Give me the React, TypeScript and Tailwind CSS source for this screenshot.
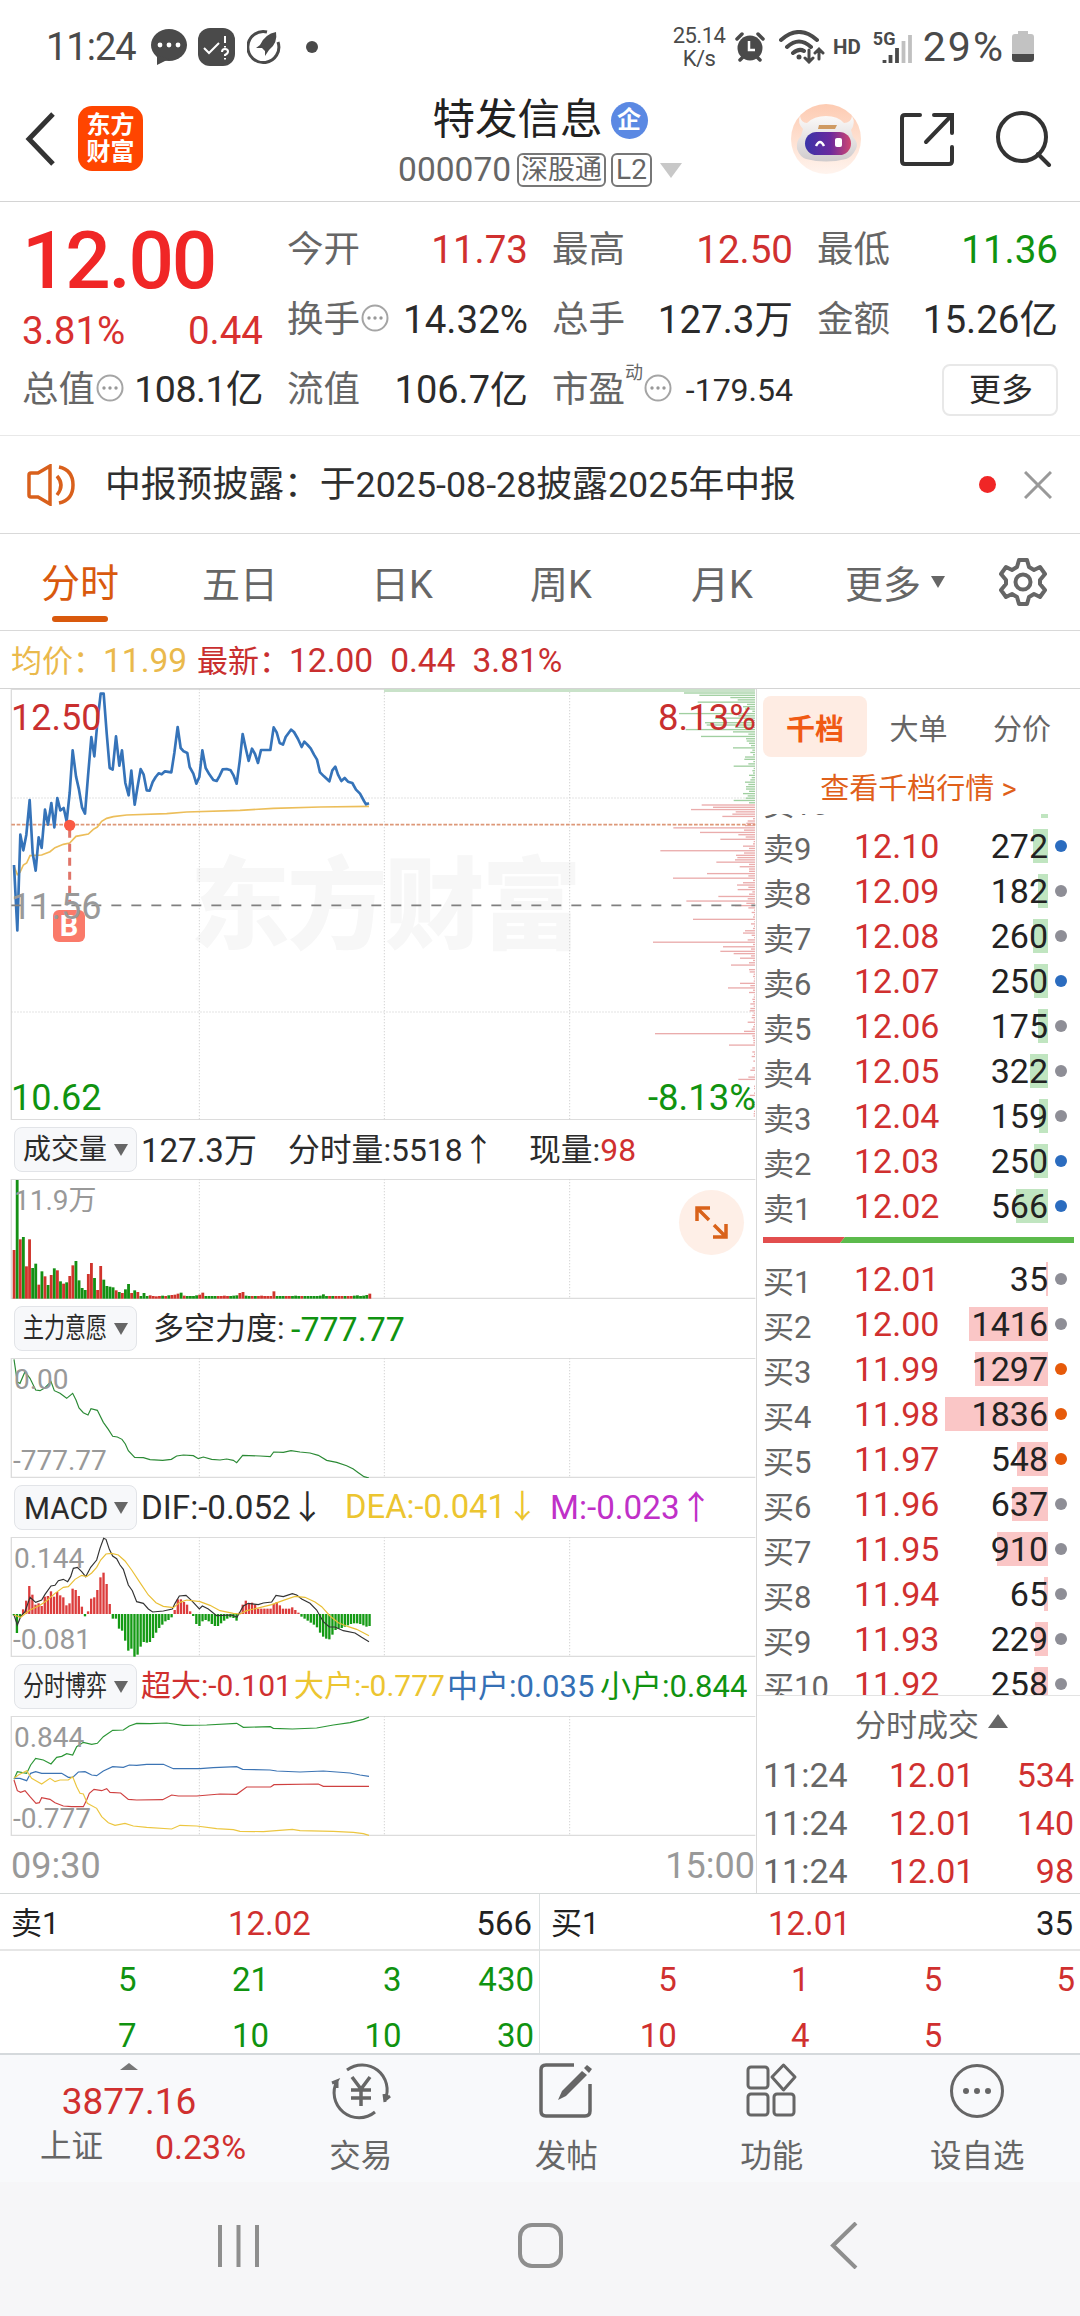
import type { ReactNode } from "react";

const step = 9.28;

const priceLine =
  "42,556 52,752 61,465 70,512 79,465 89,361 98,520 107,573 116,473 125,505 135,390 144,435 154,370 163,443 172,355 181,392 191,385 200,425 209,340 218,212 228,290 237,330 246,383 255,402 264,290 274,172 283,230 292,130 302,42 311,42 320,160 329,265 338,270 348,170 358,258 366,212 376,310 386,347 394,273 404,375 413,320 422,268 431,285 440,332 449,333 458,307 467,292 476,281 485,284 495,275 514,278 523,220 533,142 542,205 551,215 562,220 569,262 580,282 589,312 598,292 607,212 617,265 628,284 640,301 650,304 658,290 668,269 680,268 692,272 701,288 710,312 719,245 728,163 737,205 746,244 756,207 765,223 774,250 783,211 811,211 821,143 830,158 839,190 849,195 857,172 873,150 882,157 894,178 905,202 913,186 923,196 932,206 942,225 951,240 960,278 972,290 988,305 997,272 1006,261 1014,285 1024,304 1034,295 1044,306 1057,310 1068,330 1080,342 1092,364 1098,374 1107,371";
const avgLine =
  "42,560 52,585 60,578 70,556 80,550 90,528 125,526 150,516 165,504 190,494 209,490 228,470 265,463 280,449 292,442 305,425 320,416 340,411 380,406 500,402 560,397 720,392 820,386 960,382 1107,380";

const greenProfile = [
  213, 167, 74, 52, 172, 24, 36, 30, 8, 228, 50, 120, 25, 150, 145, 60, 208, 66, 20, 162, 27, 25, 18, 12, 66, 8, 14, 6,
  30, 32, 5, 20, 64, 4, 8, 6, 18, 10, 14, 30, 20, 27, 27, 18, 36, 22, 28, 64, 18,
];
const redProfile = [
  160, 126, 192, 58, 68, 98, 6, 22, 26, 30, 245, 33, 165, 50, 28, 104, 4, 6, 36, 18, 284, 33, 57, 53, 60, 116, 18, 46,
  18, 18, 144, 20, 246, 6, 36, 54, 20, 52, 8, 18, 110, 22, 206, 26, 60, 20, 3, 10, 3, 6, 186, 2, 12, 3, 6, 30, 36, 10,
  3, 22, 306, 6, 96, 12, 104, 64, 12, 45, 6, 18, 72, 0, 18, 16, 4, 6, 2, 4, 45, 14, 81, 6, 18, 2, 4, 8, 6, 14, 4, 14,
  16, 4, 8, 10, 4, 22, 3, 6, 10, 33, 300, 8, 6, 5, 5, 78, 0, 0, 8, 3, 10, 0, 5, 0, 0, 8, 14, 0, 2, 20, 50, 0, 0, 3, 3,
  0, 3, 16, 0, 0, 3, 5, 18, 0, 3, 4, 4,
];

const volumes: [string, number][] = [
  ["r", 146], ["g", 356], ["r", 178], ["g", 185], ["r", 97], ["r", 178], ["g", 92], ["g", 105], ["r", 42], ["g", 82],
  ["r", 67], ["g", 41], ["r", 71], ["g", 91], ["r", 85], ["g", 52], ["r", 45], ["g", 49], ["r", 68], ["r", 100],
  ["g", 113], ["g", 55], ["g", 32], ["g", 26], ["r", 74], ["r", 107], ["g", 62], ["r", 26], ["r", 98], ["g", 57],
  ["g", 38], ["g", 36], ["g", 34], ["r", 25], ["g", 20], ["r", 17], ["g", 28], ["g", 44], ["r", 17], ["g", 25],
  ["r", 20], ["g", 8], ["g", 17], ["g", 8], ["r", 10], ["r", 8], ["r", 7], ["r", 8], ["g", 9], ["r", 8],
  ["g", 10], ["r", 11], ["r", 12], ["r", 15], ["g", 18], ["r", 9], ["g", 8], ["g", 8], ["g", 8], ["g", 10],
  ["r", 12], ["r", 18], ["g", 8], ["g", 8], ["g", 8], ["g", 8], ["r", 8], ["r", 8], ["r", 9], ["r", 8],
  ["g", 8], ["g", 9], ["g", 10], ["r", 17], ["r", 20], ["g", 9], ["g", 8], ["r", 8], ["g", 8], ["r", 8],
  ["r", 9], ["r", 8], ["r", 8], ["r", 8], ["r", 22], ["g", 8], ["g", 8], ["g", 8], ["r", 8], ["r", 8],
  ["g", 8], ["g", 9], ["g", 8], ["r", 8], ["g", 8], ["g", 8], ["g", 8], ["g", 8], ["g", 8], ["g", 9],
  ["g", 13], ["g", 8], ["r", 8], ["g", 8], ["r", 8], ["r", 8], ["r", 8], ["g", 8], ["r", 8], ["r", 8],
  ["g", 9], ["g", 10], ["g", 8], ["g", 9], ["g", 11], ["r", 15],
];

const macdBars = [
  -4, -57, -10, 14, 40, 84, 58, 28, 32, 24, 52, 54, 68, 52, 66, 56, 50, 26, 32, 76, 72, 54, 22, -7, 8, 46, 50, 72, 110,
  124, 90, 30, -14, -14, -44, -50, -80, -110, -104, -128, -122, -98, -84, -86, -84, -72, -56, -42, -32, -22, -18, -10,
  12, 44, 44, 36, 28, 8, -6, -30, -36, -22, -18, -22, -30, -36, -36, -28, -20, -14, -10, -12, -20, 4, 28, 40, 32, 34,
  28, 16, 16, 16, 16, 16, 30, 36, 26, 16, 16, 16, 20, 12, 4, -8, -14, -20, -26, -32, -40, -56, -68, -74, -76, -62, -48,
  -44, -42, -38, -34, -30, -28, -28, -30, -34, -38, -36,
];

const stats = [
  [
    { label: "今开", value: "11.73", color: "text-[#d0302f]" },
    { label: "最高", value: "12.50", color: "text-[#d0302f]" },
    { label: "最低", value: "11.36", color: "text-[#109310]" },
  ],
  [
    { label: "换手", value: "14.32%", color: "text-[#2b2b2b]", tip: true },
    { label: "总手", value: "127.3万", color: "text-[#2b2b2b]" },
    { label: "金额", value: "15.26亿", color: "text-[#2b2b2b]" },
  ],
];

const asks = [
  { name: "卖10", price: "12.11", vol: 126, dot: "bg-[#8e8e96]" },
  { name: "卖9", price: "12.10", vol: 272, dot: "bg-[#2b6cbf]" },
  { name: "卖8", price: "12.09", vol: 182, dot: "bg-[#8e8e96]" },
  { name: "卖7", price: "12.08", vol: 260, dot: "bg-[#8e8e96]" },
  { name: "卖6", price: "12.07", vol: 250, dot: "bg-[#2b6cbf]" },
  { name: "卖5", price: "12.06", vol: 175, dot: "bg-[#8e8e96]" },
  { name: "卖4", price: "12.05", vol: 322, dot: "bg-[#8e8e96]" },
  { name: "卖3", price: "12.04", vol: 159, dot: "bg-[#8e8e96]" },
  { name: "卖2", price: "12.03", vol: 250, dot: "bg-[#2b6cbf]" },
  { name: "卖1", price: "12.02", vol: 566, dot: "bg-[#2b6cbf]" },
];

const bids = [
  { name: "买1", price: "12.01", vol: 35, dot: "bg-[#8e8e96]" },
  { name: "买2", price: "12.00", vol: 1416, dot: "bg-[#8e8e96]" },
  { name: "买3", price: "11.99", vol: 1297, dot: "bg-[#e65a0a]" },
  { name: "买4", price: "11.98", vol: 1836, dot: "bg-[#e65a0a]" },
  { name: "买5", price: "11.97", vol: 548, dot: "bg-[#e65a0a]" },
  { name: "买6", price: "11.96", vol: 637, dot: "bg-[#8e8e96]" },
  { name: "买7", price: "11.95", vol: 910, dot: "bg-[#8e8e96]" },
  { name: "买8", price: "11.94", vol: 65, dot: "bg-[#8e8e96]" },
  { name: "买9", price: "11.93", vol: 229, dot: "bg-[#8e8e96]" },
  { name: "买10", price: "11.92", vol: 258, dot: "bg-[#8e8e96]" },
];

function StatusBar() {
  return (
    <div className="flex h-[94px] items-center text-[#4a4a4a]">
      <span className="ml-[46px] w-[105px] text-[38px] leading-none tracking-[-1px]">11:24</span>
      <svg width="36" height="38" viewBox="0 0 36 38">
        <ellipse cx="18" cy="17" rx="18" ry="16" fill="#4a4a4a" />
        <path d="M6 27 L6 37 L18 31Z" fill="#4a4a4a" />
        <circle cx="9" cy="17" r="2.4" fill="#fff" />
        <circle cx="18" cy="17" r="2.4" fill="#fff" />
        <circle cx="27" cy="17" r="2.4" fill="#fff" />
      </svg>
      <svg className="ml-[11px]" width="37" height="38" viewBox="0 0 37 38">
        <rect width="37" height="38" rx="12" fill="#4a4a4a" />
        <path d="M6 20 L11 25 L21 15" fill="none" stroke="#fff" strokeWidth="2" />
        <path d="M27 8 V15 M27 18 V19.500 M24 24 q0 -3 3 -3 q3 0 3 2.500 q0 2 -3 3.500 v1 M27 30 v1.500" fill="none" stroke="#fff" strokeWidth="2" />
      </svg>
      <svg className="ml-[12px]" width="34" height="36" viewBox="0 0 34 36" fill="none" stroke="#4a4a4a" strokeWidth="3">
        <path d="M20 3 A15.500 15.500 0 1 0 31 13" />
        <path d="M29 3 Q18 5 13 16 L9 19 L15 19 L18 22 L18 27 L22 21 Q31 14 29 3Z" fill="#4a4a4a" stroke="none" />
      </svg>
      <span className="ml-[25px] size-[12px] rounded-full bg-[#4a4a4a]" />
      <div className="ml-[356px] flex w-[50px] flex-col items-center text-[22px] leading-[23px] tracking-[-0.5px]">
        <span>25.14</span>
        <span>K/s</span>
      </div>
      <svg className="ml-[11px]" width="30" height="30" viewBox="0 0 30 30">
        <circle cx="15" cy="16" r="12.500" fill="#4a4a4a" />
        <path d="M2 7 L7 2 M28 7 L23 2 M5 28 L8 25 M25 28 L22 25" stroke="#4a4a4a" strokeWidth="3.500" strokeLinecap="round" />
        <path d="M14 9 V18 H20" stroke="#fff" strokeWidth="2.500" fill="none" />
      </svg>
      <svg className="ml-[14px]" width="46" height="34" viewBox="0 0 46 34" fill="none" stroke="#4a4a4a" strokeWidth="4" strokeLinecap="round">
        <path d="M2 10 Q20 -6 38 10 M8 17 Q20 6 32 17 M14 23 Q20 18 25 21" />
        <circle cx="20" cy="27" r="2.500" fill="#4a4a4a" stroke="none" />
        <path d="M30 20 V32 M26 28 L30 32 L34 28 M40 29 V19 M36 23 L40 19 L44 23" strokeWidth="3" />
      </svg>
      <span className="ml-[8px] text-[20.5px] leading-none font-bold">HD</span>
      <div className="ml-[12px] flex h-[34px] w-[40px] items-start">
        <span className="text-[18px] leading-none font-bold">5G</span>
        <svg className="mt-[3px] -ml-[13px] shrink-0" width="30" height="31" viewBox="0 0 30 31">
          <path d="M2.500 27 V30 M8.500 22 V30 M15 15 V30" stroke="#4a4a4a" strokeWidth="3.800" />
          <path d="M21.500 8 V30 M28 2 V30" stroke="#c0c0c0" strokeWidth="3.800" />
        </svg>
      </div>
      <span className="ml-[10px] w-[88px] text-[41px] leading-none tracking-[2px]">29%</span>
      <svg className="ml-px" width="22" height="32" viewBox="0 0 22 32">
        <path d="M6 0 H16 V3 H19 Q22 3 22 6 V26 H0 V6 Q0 3 3 3 H6Z" fill="#c2c2c2" />
        <path d="M0 23 H22 V28 Q22 31 18 31 H4 Q0 31 0 28Z" fill="#4a4a4a" />
      </svg>
    </div>
  );
}

function Robot() {
  return (
    <svg width="72" height="72" viewBox="0 0 72 72">
      <defs>
        <linearGradient id="halo" x1="0" y1="0" x2="0" y2="1">
          <stop offset="0" stopColor="#fdcbb2" />
          <stop offset="1" stopColor="#fff4ee" />
        </linearGradient>
        <linearGradient id="visor" x1="0" y1="0" x2="1" y2="0">
          <stop offset="0" stopColor="#3a34a8" />
          <stop offset="0.55" stopColor="#6a2a9e" />
          <stop offset="1" stopColor="#d04670" />
        </linearGradient>
        <linearGradient id="shell" x1="0" y1="0" x2="0" y2="1">
          <stop offset="0" stopColor="#fbf9f8" />
          <stop offset="1" stopColor="#cfcbcd" />
        </linearGradient>
      </defs>
      <circle cx="36" cy="36" r="35" fill="url(#halo)" />
      <path d="M10 13 Q11 20 17 20 Q24 13 36 13 Q48 13 54 20 Q61 20 62 13 Q66 20 61 27 L63 34 Q69 40 66 46 Q62 54 56 56 Q36 61 16 56 Q10 54 7 46 Q6 38 11 33 L13 26 Q7 20 10 13Z" fill="url(#shell)" />
      <path d="M29 22 H47 L45 26 H28Z" fill="#cf9a62" />
      <rect x="15" y="29" width="46" height="23" rx="11.5" fill="url(#visor)" />
      <path d="M26 43 Q30 35 34 43" fill="none" stroke="#fff" strokeWidth="2.500" />
      <rect x="45" y="35" width="7" height="9" rx="2" fill="#fff" />
    </svg>
  );
}

function Header() {
  return (
    <div className="flex h-[108px] items-center border-b border-[#d4d4d4] pb-[18px]">
      <svg className="ml-[24px]" width="32" height="54" viewBox="0 0 32 54" fill="none" stroke="#333" strokeWidth="5">
        <path d="M29 2 L5 27 L29 52" />
      </svg>
      <div className="ml-[22px] flex size-[65px] flex-col items-center justify-center rounded-[14px] bg-[#ff4500] text-[24px] leading-[27px] font-bold text-white">
        <span>东方</span>
        <span>财富</span>
      </div>
      <div className="mt-[13px] ml-[222px] flex w-[350px] flex-col items-center">
        <div className="flex h-[50px] items-center text-[42.5px] leading-none text-[#222]">
          特发信息
          <span className="ml-[8px] flex size-[37px] items-center justify-center rounded-full bg-[#5b89e3] text-[24px] font-bold text-white">
            企
          </span>
        </div>
        <div className="flex h-[50px] items-center text-[33.5px] leading-none text-[#666]">
          000070
          <span className="ml-[6px] flex h-[34px] items-center rounded-[6px] border-2 border-[#777] px-[2px] text-[27px]">深股通</span>
          <span className="ml-[5px] flex h-[34px] items-center rounded-[6px] border-2 border-[#777] px-[3px] text-[28px]">L2</span>
          <svg className="ml-[8px]" width="22" height="15" viewBox="0 0 22 15">
            <path d="M0 0 H22 L11 15Z" fill="#c8c8c8" />
          </svg>
        </div>
      </div>
      <div className="ml-[75px]">
        <Robot />
      </div>
      <svg className="ml-[37px]" width="56" height="56" viewBox="0 0 56 56" fill="none" stroke="#333" strokeWidth="4" strokeLinecap="round">
        <path d="M21 4 H6 Q3 4 3 7 V50 Q3 53 6 53 H50 Q53 53 53 50 V36 M35 4 H53 V22 M52 5 L27 31" />
      </svg>
      <svg className="ml-[40px]" width="58" height="56" viewBox="0 0 58 56" fill="none" stroke="#333" strokeWidth="4" strokeLinecap="round">
        <circle cx="27" cy="26" r="24" />
        <path d="M43 43 L54 54" />
      </svg>
    </div>
  );
}

function Tip() {
  return (
    <svg className="mb-[4px] ml-px shrink-0" width="28" height="28" viewBox="0 0 28 28">
      <circle cx="14" cy="14" r="12.500" fill="none" stroke="#a5a5a5" strokeWidth="2" />
      <circle cx="8" cy="14" r="1.700" fill="#999" />
      <circle cx="14" cy="14" r="1.700" fill="#999" />
      <circle cx="20" cy="14" r="1.700" fill="#999" />
    </svg>
  );
}

function Quote() {
  return (
    <div className="h-[234px] border-b border-[#e8e8e8] pt-[13px] pr-[22px] pl-[22px] text-[36.5px] leading-none text-[#666]">
      <div className="grid grid-cols-[241px_1fr] gap-[24px]">
        <div className="flex flex-col text-[#d8302f]">
          <span className="mt-[6px] text-[80px] font-medium tracking-[-2.2px] text-[#f02626]">12.00</span>
          <div className="mt-[11px] flex justify-between text-[38.5px]">
            <span>3.81%</span>
            <span>0.44</span>
          </div>
        </div>
        <div>
          {stats.map((row, i) => (
            <div key={i} className="grid h-[70px] grid-cols-3 items-center gap-[24px]">
              {row.map((s) => (
                <div key={s.label} className="flex items-center">
                  {s.label}
                  {s.tip && <Tip />}
                  <span className={`ml-auto text-[38.5px] ${s.color}`}>{s.value}</span>
                </div>
              ))}
            </div>
          ))}
        </div>
      </div>
      <div className="grid h-[70px] grid-cols-4 items-center gap-[24px]">
        <div className="flex items-center">
          总值
          <Tip />
          <span className="ml-auto text-[37.5px] tracking-[-0.5px] text-[#2b2b2b]">108.1亿</span>
        </div>
        <div className="flex items-center">
          流值
          <span className="ml-auto text-[38px] text-[#2b2b2b]">106.7亿</span>
        </div>
        <div className="flex items-center">
          市盈
          <span className="mb-[34px] text-[18px]">动</span>
          <Tip />
          <span className="ml-auto text-[32px] text-[#2b2b2b]">-179.54</span>
        </div>
        <div className="flex justify-end">
          <span className="flex h-[52px] w-[116px] items-center justify-center rounded-[8px] border-2 border-[#e8e8e8] pl-[2px] text-[32px] text-[#2b2b2b]">
            更多
          </span>
        </div>
      </div>
    </div>
  );
}

function Notice() {
  return (
    <div className="flex h-[98px] items-center border-b border-[#d9d9d9] text-[35.8px] leading-none text-[#2f2f2f]">
      <svg className="ml-[27px]" width="50" height="42" viewBox="0 0 50 42" fill="none" stroke="#d9601c" strokeWidth="3.500">
        <path d="M2 11 Q2 9 4 9 H11 L23 2 V40 L11 33 H4 Q2 33 2 31Z" />
        <path d="M30 12 Q38 21 30 31 M32 3 Q46 6 46 21 Q46 36 32 39" />
      </svg>
      <span className="ml-[28px] pt-[2px]">中报预披露：于2025-08-28披露2025年中报</span>
      <span className="mr-[28px] ml-auto size-[17px] rounded-full bg-[#f02626]" />
      <svg className="mr-[28px]" width="28" height="28" viewBox="0 0 28 28" stroke="#999" strokeWidth="3">
        <path d="M1 1 L27 27 M27 1 L1 27" />
      </svg>
    </div>
  );
}

function Tabs() {
  return (
    <div className="flex h-[97px] items-center border-b border-[#d9d9d9] text-[38px] leading-none text-[#666]">
      <div className="relative ml-[41px] w-[161px] pt-[5px] text-[39px] text-[#d9590d]">
        分时
        <span className="absolute top-[56px] left-[11px] h-[6px] w-[56px] rounded-full bg-[#d9590d]" />
      </div>
      <span className="w-[169px] pt-[5px]">五日</span>
      <span className="w-[159px] pt-[5px]">日K</span>
      <span className="w-[161px] pt-[5px]">周K</span>
      <span className="w-[154px] pt-[5px]">月K</span>
      <span className="pt-[5px]">更多</span>
      <svg className="ml-[10px]" width="14" height="12" viewBox="0 0 14 12">
        <path d="M0 0 H14 L7 12Z" fill="#666" />
      </svg>
      <svg className="mr-[33px] ml-auto" width="48" height="50" viewBox="0 0 48 50" fill="none" stroke="#666" strokeWidth="4">
        <path
          strokeLinejoin="round"
          d="M20 3 H28 L30 10 L35 13 L41 10 L46 17 L41 23 V27 L46 33 L41 40 L35 37 L30 40 L28 47 H20 L18 40 L13 37 L7 40 L2 33 L7 27 V23 L2 17 L7 10 L13 13 L18 10Z"
        />
        <circle cx="24" cy="25" r="7.500" />
      </svg>
    </div>
  );
}

function Grid({ top, bottom }: { top: number; bottom: number }) {
  return (
    <>
      <path d={`M34 ${top + 1} H2266 M34 ${bottom - 2} H2266 M34 ${top} V${bottom}`} stroke="#dcdcdc" strokeWidth="4" />
      <path d={`M598 ${top} V${bottom} M1153 ${top} V${bottom} M1709 ${top} V${bottom}`} stroke="#d4d4d4" strokeWidth="3" strokeDasharray="4 5" />
    </>
  );
}

function PriceChart() {
  return (
    <div className="relative h-[431px] text-[36px] leading-none">
      <svg className="block" width="757" height="431" viewBox="0 28 2271 1293" fill="none">
        <text x="570" y="783" fontSize="300" fontWeight="900" fill="#f7f7f7" textLength="1175">
          东方财富
        </text>
        <Grid top={28} bottom={1322} />
        <path d="M34 355 H2266 M34 997 H2266" stroke="#d4d4d4" strokeWidth="3" strokeDasharray="4 5" />
        <rect x="1152" y="28" width="1113" height="9" fill="#c9e2c9" />
        {greenProfile.map((w, i) => (
          <rect key={i} x={2265 - w} y={38 + i * 6.86} width={w} height="4" fill="#a0cfa0" />
        ))}
        {redProfile.map((w, i) => (
          <rect key={i} x={2265 - w} y={374 + i * 6.86} width={w} height="4" fill="#eaacac" />
        ))}
        <path d="M34 435 H2266" stroke="#dd9878" strokeWidth="5" strokeDasharray="11 5" />
        <polyline points={avgLine} stroke="#ecbe5a" strokeWidth="5" />
        <polyline points={priceLine} stroke="#3573b9" strokeWidth="8" strokeLinejoin="round" />
        <path d="M34 677 H2266" stroke="#808080" strokeWidth="5" strokeDasharray="30 30" />
        <path d="M209 450 V670" stroke="#e07468" strokeWidth="9" strokeDasharray="24 18" />
        <circle cx="209" cy="437" r="17" fill="#fa5a44" />
      </svg>
      <span className="absolute top-[221px] left-[53px] flex size-[32px] items-center justify-center rounded-[6px] bg-[#fa7a6a] text-[29px] font-bold text-white">
        B
      </span>
      <span className="absolute top-[11px] left-[11px] text-[#c92f2f]">12.50</span>
      <span className="absolute top-[200px] left-[11px] text-[#999]">11.56</span>
      <span className="absolute top-[391px] left-[11px] text-[#109310]">10.62</span>
      <span className="absolute top-[11px] right-0 text-[36.5px] text-[#c92f2f]">8.13%</span>
      <span className="absolute top-[391px] right-0 text-[36.5px] text-[#109310]">-8.13%</span>
    </div>
  );
}

function Panel(props: {
  name: string;
  nameStyle?: string;
  head: ReactNode;
  top: number;
  max: string;
  min?: string;
  children: ReactNode;
}) {
  return (
    <div className="h-[179px]">
      <div className="flex h-[59px] items-center text-[32px] leading-none whitespace-nowrap text-[#2b2b2b]">
        <div className="ml-[14px] flex h-[45px] w-[123px] shrink-0 items-center justify-between rounded-[8px] border border-[#e2e4e8] bg-[#f7f8fa] px-[8px]">
          <span className="w-[84px] text-[28px]">
            <span className={`inline-block ${props.nameStyle ?? ""}`}>{props.name}</span>
          </span>
          <svg className="shrink-0" width="14" height="12" viewBox="0 0 14 12">
            <path d="M0 0 H14 L7 12Z" fill="#666" />
          </svg>
        </div>
        {props.head}
      </div>
      <div className="relative h-[120px] text-[28px] leading-none text-[#999]">
        <svg className="block" width="757" height="120" viewBox={`0 ${props.top} 2271 360`} fill="none">
          <Grid top={props.top} bottom={props.top + 360} />
          {props.children}
        </svg>
        <span className="absolute top-[8px] left-[14px]">{props.max}</span>
        {props.min && <span className="absolute bottom-[3px] left-[13px]">{props.min}</span>}
      </div>
    </div>
  );
}

function Charts() {
  return (
    <div className="w-[757px] shrink-0 border-r border-[#d9d9d9]">
      <PriceChart />
      <Panel
        name="成交量"
        top={178}
        max="11.9万"
        head={
          <>
            <span className="ml-[4px] w-[147px] pt-[2px] text-[33px]">127.3万</span>
            <span className="w-[241px] pt-[2px] text-[31.8px]">分时量:5518↑</span>
            <span className="pt-[2px] text-[31.8px]">
              现量:<span className="text-[#d0302f]">98</span>
            </span>
          </>
        }
      >
        {volumes.map(([c, h], i) => (
          <rect key={i} x={38 + i * step} y={537 - h} width="8.500" height={h} fill={c === "r" ? "#d0342c" : "#149014"} />
        ))}
      </Panel>
      <Panel
        name="主力意愿"
        nameStyle="origin-left scale-x-[0.75]"
        top={714}
        max="0.00"
        min="-777.77"
        head={
          <>
            <span className="ml-[16px] w-[138px] text-[31px]">多空力度:</span>
            <span className="text-[34px] text-[#109310]">-777.77</span>
          </>
        }
      >
        <polyline
          stroke="#2b8a35"
          strokeWidth="3.500"
          points="42,718 52,786 60,790 75,755 90,775 107,810 120,812 135,803 153,785 163,812 180,820 200,835 218,820 228,840 237,864 250,878 264,885 273,866 292,871 310,907 325,928 338,949 352,951 366,958 376,972 385,992 404,1012 430,1013 450,1019 488,1021 514,1018 530,1008 550,1005 580,1007 595,1016 610,1011 635,1018 660,1020 680,1017 700,1021 710,1028 728,1006 780,1008 811,1010 821,996 850,997 873,992 900,996 930,999 955,1006 980,1021 1010,1027 1040,1037 1060,1047 1075,1058 1092,1070 1107,1074"
        />
      </Panel>
      <Panel
        name="MACD"
        nameStyle="origin-left scale-x-[0.93] text-[32px] pl-px"
        top={171}
        max="0.144"
        min="-0.081"
        head={
          <>
            <span className="ml-[4px] w-[204px] text-[33.2px]">DIF:-0.052↓</span>
            <span className="w-[205px] text-[32.8px] text-[#ecc530]">DEA:-0.041↓</span>
            <span className="text-[33.2px] text-[#c030c8]">M:-0.023↑</span>
          </>
        }
      >
        {macdBars.map((v, i) => (
          <rect
            key={i}
            x={38 + i * step}
            y={v > 0 ? 402 - v : 402}
            width="7"
            height={Math.abs(v)}
            fill={v > 0 ? "#dc3c3c" : "#149a14"}
          />
        ))}
        <polyline
          stroke="#333"
          strokeWidth="3.5"
          points="42,405 52,435 62,410 75,395 90,352 107,367 125,360 135,343 153,318 165,316 175,302 190,298 203,305 212,290 220,265 232,262 245,275 257,290 265,275 272,262 290,240 300,205 311,175 318,178 328,208 338,228 350,236 360,255 370,268 385,315 397,332 410,365 430,370 445,387 458,396 490,393 517,387 525,370 538,348 558,346 575,362 598,387 607,378 625,387 650,407 695,405 711,412 730,378 745,370 775,374 790,369 815,366 828,346 850,350 877,341 890,345 905,357 930,370 950,390 970,425 988,441 1005,441 1030,452 1065,459 1085,472 1107,485"
        />
        <polyline
          stroke="#e9bf35"
          strokeWidth="3.5"
          points="42,405 62,412 90,390 120,376 140,362 165,340 190,322 205,320 225,298 245,286 260,290 275,279 290,262 302,240 318,222 335,220 355,225 375,243 395,270 420,308 445,345 468,368 490,379 520,383 540,367 560,360 600,365 630,376 660,392 700,400 720,402 740,392 770,385 815,374 850,361 885,349 915,352 945,366 965,380 990,408 1015,428 1045,440 1070,448 1107,467"
        />
      </Panel>
      <Panel
        name="分时博弈"
        nameStyle="origin-left scale-x-[0.75]"
        top={708}
        max="0.844"
        min="-0.777"
        head={
          <div className="ml-[4px] flex text-[30px]">
            <span className="w-[153px] text-[#d0302f]">超大:-0.101</span>
            <span className="w-[153px] text-[#ecc530]">大户:-0.777</span>
            <span className="w-[153px] text-[31px] text-[#3570b5]">中户:0.035</span>
            <span className="text-[31px] text-[#109310]">小户:0.844</span>
          </div>
        }
      >
        <g strokeWidth="3.5">
          <polyline
            stroke="#2c9636"
            points="42,898 52,875 80,880 92,855 107,835 130,840 153,852 170,832 185,829 200,821 218,825 230,800 250,787 275,793 292,790 310,770 338,751 370,750 388,738 410,730 450,731 500,729 550,736 620,735 710,730 730,742 811,740 820,745 877,747 950,744 1000,735 1050,728 1090,718 1107,711"
          />
          <polyline
            stroke="#3c74b4"
            points="42,895 60,895 80,902 92,880 107,875 125,880 185,880 205,892 218,892 235,876 255,875 275,885 290,887 310,873 338,860 370,862 388,855 410,856 440,853 490,853 520,866 600,866 640,863 710,860 728,868 810,870 830,873 900,876 970,873 1050,879 1080,885 1107,889"
          />
          <polyline
            stroke="#cf4040"
            points="42,900 52,932 62,937 75,932 90,950 108,970 118,968 125,953 150,958 165,968 190,978 215,980 250,980 260,960 268,940 282,928 305,932 320,926 330,937 362,939 385,958 410,960 488,959 515,945 535,948 590,948 660,942 710,943 740,921 812,921 822,914 955,912 970,919 1107,919"
          />
          <polyline
            stroke="#ecc640"
            points="42,895 55,885 80,872 95,895 125,912 150,895 165,905 180,900 205,900 218,890 230,920 240,940 250,942 262,970 290,985 305,1010 325,1028 345,1036 375,1030 400,1038 440,1042 515,1047 540,1036 590,1038 650,1046 700,1049 720,1054 790,1055 877,1048 900,1052 1000,1054 1060,1057 1090,1061 1107,1066"
          />
        </g>
      </Panel>
      <div className="flex h-[57px] items-center justify-between pt-[2px] pr-px pl-[11px] text-[36px] leading-none text-[#999]">
        <span>09:30</span>
        <span>15:00</span>
      </div>
    </div>
  );
}

function Level({ row, bar }: { row: (typeof asks)[number]; bar: string }) {
  return (
    <div className="flex h-[45px] shrink-0 items-center pl-[6px] text-[34px] leading-none">
      <span className="w-[91px] pt-[8px] text-[31px] text-[#666]">{row.name}</span>
      <span className="w-[84px] text-[#d0302f]">{row.price}</span>
      <div className="relative flex h-[34px] w-[110px] items-center justify-end text-[#222]">
        <span className={`absolute top-0 right-0 h-full ${bar}`} style={{ width: Math.max(row.vol * 0.0561, 1) }} />
        <span className="relative">{row.vol}</span>
      </div>
      <span className={`ml-[7px] size-[12px] rounded-full ${row.dot}`} />
    </div>
  );
}

function OrderBook() {
  return (
    <div className="flex flex-1 flex-col leading-none">
      <div className="mt-[7px] ml-[6px] flex h-[61px] items-center text-[29px] text-[#666]">
        <span className="flex h-full w-[104px] items-center justify-center rounded-[8px] bg-[#feece3] pt-[8px] font-bold text-[#f05a14]">千档</span>
        <span className="w-[103px] pt-[8px] text-center">大单</span>
        <span className="w-[104px] pt-[8px] text-center">分价</span>
      </div>
      <div className="flex h-[57px] items-center justify-center pt-[9px] text-[29px] text-[#e0601a]">查看千档行情 &gt;</div>
      <div className="flex h-[416px] flex-col justify-end overflow-hidden">
        {asks.map((row) => (
          <Level key={row.name} row={row} bar="bg-[#c0e5c0]" />
        ))}
      </div>
      <svg className="mt-[9px] ml-[6px] shrink-0" width="311" height="6" viewBox="0 0 311 6">
        <path d="M0 0 H82 L77 6 H0Z" fill="#e24e4e" />
        <path d="M82 0 H311 V6 H77Z" fill="#5cba4c" />
      </svg>
      <div className="mt-[13px] h-[441px] overflow-hidden border-b border-[#e3e3e3]">
        {bids.map((row) => (
          <Level key={row.name} row={row} bar="bg-[#fac6c6]" />
        ))}
      </div>
      <div className="flex h-[54px] items-center justify-center pt-[5px] pl-[26px] text-[31px] text-[#666]">
        分时成交
        <svg className="mb-[9px] ml-[9px]" width="20" height="14" viewBox="0 0 20 14">
          <path d="M10 0 L20 14 H0Z" fill="#666" />
        </svg>
      </div>
      {["534", "140", "98"].map((vol) => (
        <div key={vol} className="flex h-[48px] items-center pt-[3px] pr-[6px] pl-[6px] text-[34px] text-[#d0302f]">
          <span className="w-[126px] text-[#666]">11:24</span>
          <span>12.01</span>
          <span className="ml-auto">{vol}</span>
        </div>
      ))}
    </div>
  );
}

function Queue(props: { name: string; price: string; total: string; rows: string[][]; color: string }) {
  return (
    <div className="w-1/2 border-r border-[#dde2e2] text-[33px] leading-none last:border-r-0">
      <div className="flex h-[57px] items-center border-b-2 border-[#e6e6e6] pt-[4px] pr-[7px] pl-[11px] text-[#222]">
        <span className="w-[217px] text-[31px]">{props.name}</span>
        <span className="text-[#d0302f]">{props.price}</span>
        <span className="ml-auto">{props.total}</span>
      </div>
      {props.rows.map((row, i) => (
        <div key={i} className={`grid h-[56px] grid-cols-4 items-center pr-[5px] pl-[4px] text-right ${props.color}`}>
          {row.map((n, j) => (
            <span key={j}>{n}</span>
          ))}
        </div>
      ))}
    </div>
  );
}

function BarItem({ label, children }: { label: string; children: ReactNode }) {
  return (
    <div className="flex w-[205.500px] flex-col items-center text-[31.5px] leading-none text-[#666]">
      <svg className="mt-[7px]" width="60" height="58" viewBox="0 0 60 58" fill="none" stroke="#666" strokeWidth="3">
        {children}
      </svg>
      <span className="mt-[21px]">{label}</span>
    </div>
  );
}

function BottomBar() {
  return (
    <div className="flex h-[129px] border-t-2 border-[#d5d9dc] bg-[#f8f9fb] leading-none">
      <div className="flex w-[258px] flex-col items-center text-[37px] text-[#d0302f]">
        <svg className="mt-[8px]" width="18" height="7" viewBox="0 0 18 7">
          <path d="M9 0 L18 7 H0Z" fill="#777" />
        </svg>
        <span className="mt-[13px]">3877.16</span>
        <div className="mt-[10px] flex items-center text-[34px]">
          <span className="w-[115px] text-[31.5px] text-[#666]">上证</span>
          <span className="-mr-[28px]">0.23%</span>
        </div>
      </div>
      <BarItem label="交易">
        <path d="M16 8 A25 25 0 0 1 54 38 L59 34 M44 50 A25 25 0 0 1 6 19 L1 21 M54 40 L53 32 M6 18 V26" />
        <path d="M21 15 L30 27 L39 15 M30 27 V44 M20 28 H40 M20 36 H40" strokeWidth="3.500" />
      </BarItem>
      <BarItem label="发帖">
        <path d="M38 3 H10 Q5 3 5 8 V49 Q5 54 10 54 H49 Q54 54 54 49 V22" strokeWidth="3.500" />
        <path d="M22 38 L26 29 L46 9 L51 13 L30 34Z M48 6 L51 3 L56 7 L53 11Z" fill="#666" stroke="none" />
      </BarItem>
      <BarItem label="功能">
        <rect x="6" y="5" width="20" height="21" rx="3" />
        <path d="M41.500 3 L53 15 L41.500 28 L30 15Z" strokeLinejoin="round" />
        <rect x="6" y="32" width="20" height="21" rx="3" />
        <rect x="32" y="32" width="20" height="21" rx="3" />
      </BarItem>
      <BarItem label="设自选">
        <circle cx="30" cy="29" r="25.500" />
        <circle cx="19" cy="29" r="3" fill="#666" stroke="none" />
        <circle cx="30" cy="29" r="3" fill="#666" stroke="none" />
        <circle cx="41" cy="29" r="3" fill="#666" stroke="none" />
      </BarItem>
    </div>
  );
}

export default function App() {
  return (
    <div className="flex h-[2316px] w-[1080px] flex-col overflow-hidden bg-white font-[Roboto,'Noto_Sans_CJK_SC',sans-serif]">
      <StatusBar />
      <Header />
      <Quote />
      <Notice />
      <Tabs />
      <div className="flex h-[58px] items-center border-b border-[#d4d4d4] pt-[3px] pl-[11px] text-[33.5px] leading-none whitespace-nowrap text-[#c92f2f]">
        <span className="w-[92px] text-[31px] text-[#eab94c]">均价：</span>
        <span className="w-[94px] text-[#eab94c]">11.99</span>
        <span className="w-[92px] text-[31px]">最新：</span>
        <span>12.00</span>
        <span className="ml-[17px]">0.44</span>
        <span className="ml-[17px]">3.81%</span>
      </div>
      <div className="relative flex h-[1204px]">
        <Charts />
        <OrderBook />
        <div className="absolute top-[501px] left-[679px] flex size-[65px] items-center justify-center rounded-full bg-[#feefe7]">
          <svg width="33" height="33" viewBox="0 0 33 33" fill="none" stroke="#d9621a" strokeWidth="3.500">
            <path d="M2 15 V2 H15 M2 2 L14 14 M31 18 V31 H18 M31 31 L19 19" />
          </svg>
        </div>
      </div>
      <div className="flex h-[160px] overflow-hidden border-t border-[#d4d8d8]">
        <Queue
          name="卖1"
          price="12.02"
          total="566"
          color="text-[#109310]"
          rows={[
            ["5", "21", "3", "430"],
            ["7", "10", "10", "30"],
          ]}
        />
        <Queue
          name="买1"
          price="12.01"
          total="35"
          color="text-[#d0302f]"
          rows={[
            ["5", "1", "5", "5"],
            ["10", "4", "5", ""],
          ]}
        />
      </div>
      <BottomBar />
      <div className="flex flex-1 bg-[#f6f6f8]">
        <svg className="mt-[42px] ml-[217px]" width="43" height="44" viewBox="0 0 43 44" stroke="#8e8e8e" strokeWidth="4">
          <path d="M3 1 V43 M21.500 1 V43 M40 1 V43" />
        </svg>
        <span className="mt-[41px] ml-[258px] size-[45px] rounded-[14px] border-4 border-[#8e8e8e]" />
        <svg className="mt-[40px] ml-[267px]" width="28" height="47" viewBox="0 0 28 47" fill="none" stroke="#8e8e8e" strokeWidth="4">
          <path d="M26 1 L3 23.500 L26 46" />
        </svg>
      </div>
    </div>
  );
}
